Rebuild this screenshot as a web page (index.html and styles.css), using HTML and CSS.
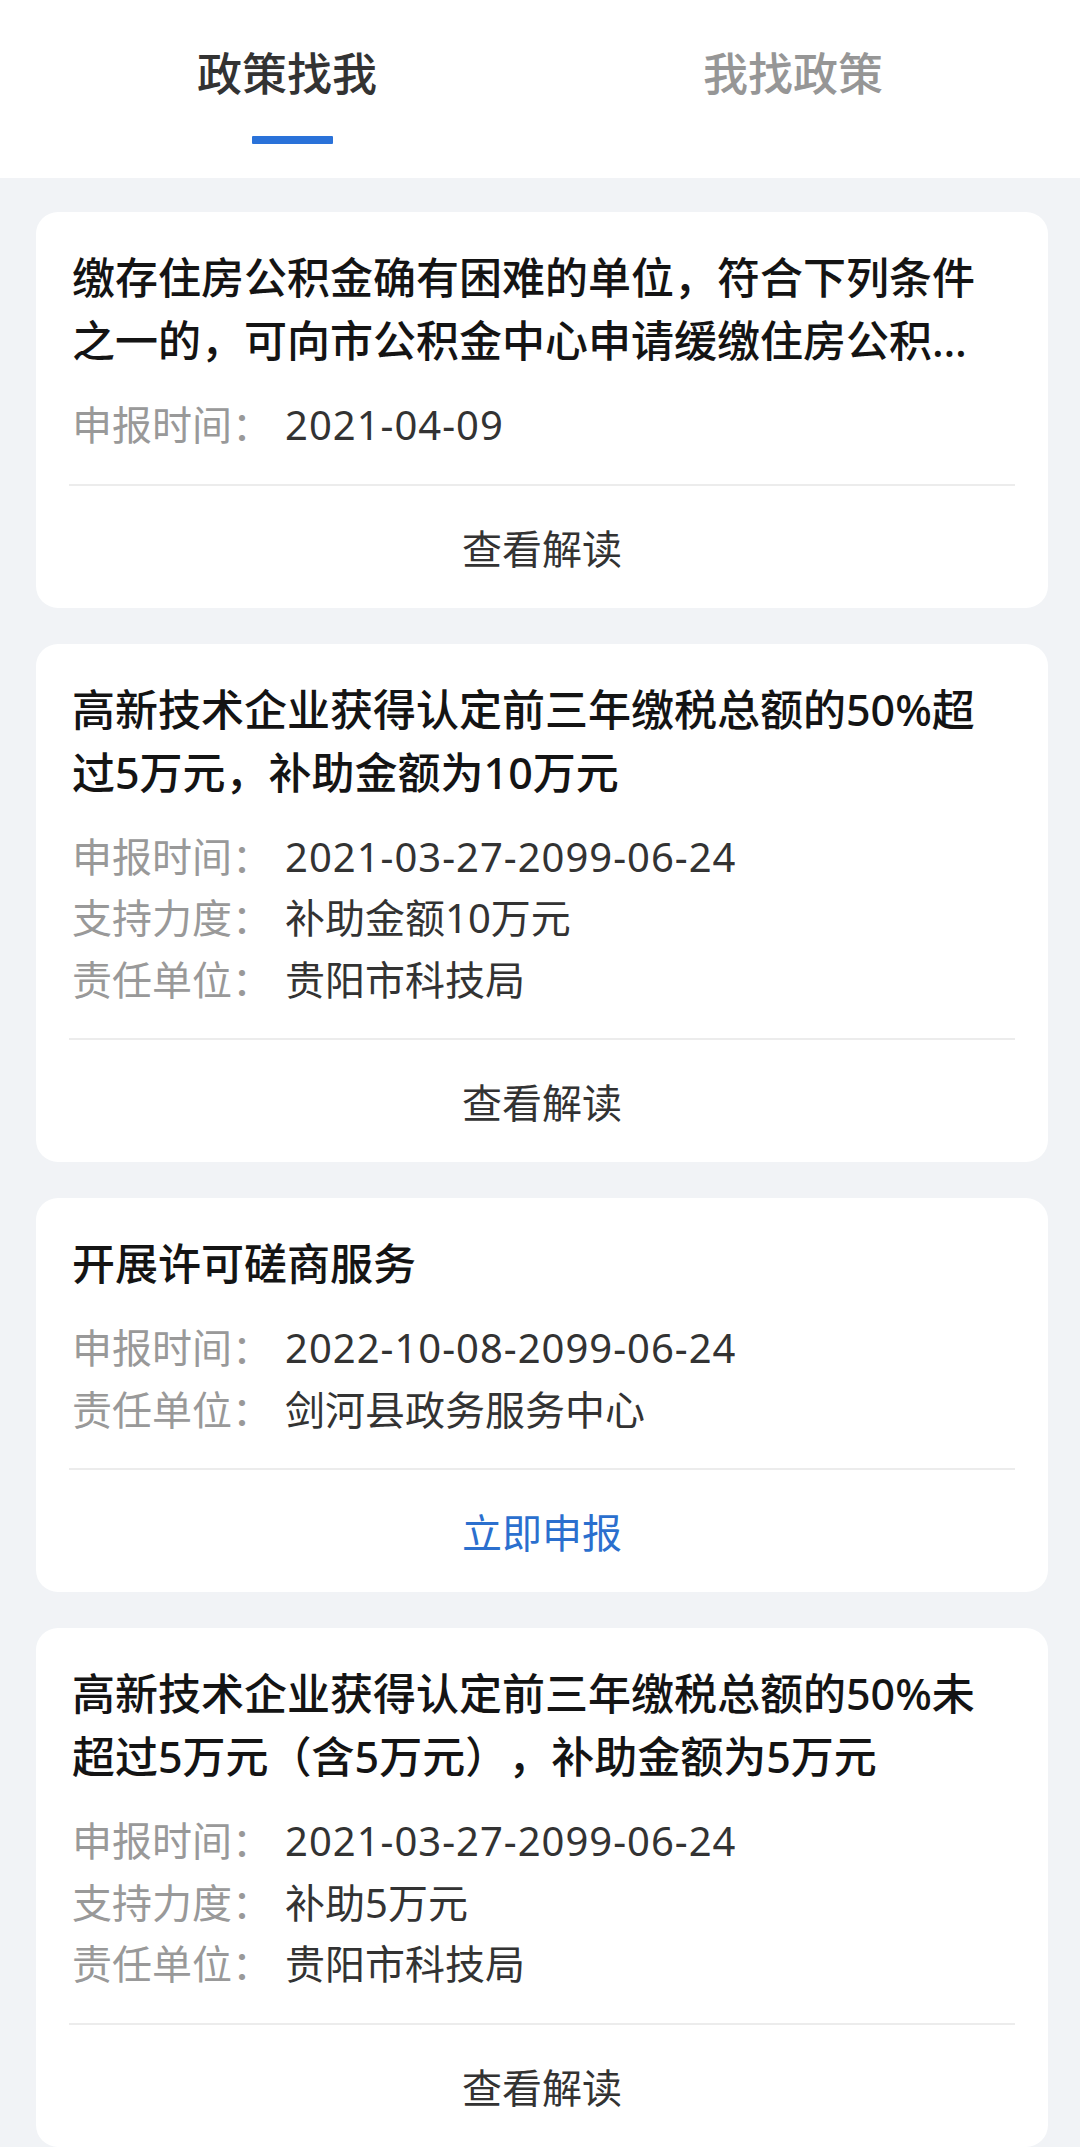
FILE: index.html
```html
<!DOCTYPE html>
<html lang="zh-CN">
<head>
  <meta charset="UTF-8">
  <meta name="viewport" content="width=device-width, initial-scale=1.0">
  <title>政策找我</title>
  <link rel="stylesheet" href="styles.css">
</head>
<body>

<header class="tabs">
  <div class="tab active">
    <span class="tab-text">政策找我</span>
    <i class="tab-line"></i>
  </div>
  <div class="tab">
    <span class="tab-text">我找政策</span>
  </div>
</header>

<main class="list">

  <section class="card">
    <div class="card-body">
      <h3 class="title clamp">缴存住房公积金确有困难的单位，符合下列条件之一的，可向市公积金中心申请缓缴住房公积金：</h3>
      <div class="rows">
        <div class="row"><span class="label">申报时间：</span><span class="value date">2021-04-09</span></div>
      </div>
    </div>
    <div class="divider"></div>
    <a href="#" class="action">查看解读</a>
  </section>

  <section class="card">
    <div class="card-body">
      <h3 class="title">高新技术企业获得认定前三年缴税总额的50%超过5万元，补助金额为10万元</h3>
      <div class="rows">
        <div class="row"><span class="label">申报时间：</span><span class="value date">2021-03-27-2099-06-24</span></div>
        <div class="row"><span class="label">支持力度：</span><span class="value">补助金额10万元</span></div>
        <div class="row"><span class="label">责任单位：</span><span class="value">贵阳市科技局</span></div>
      </div>
    </div>
    <div class="divider"></div>
    <a href="#" class="action">查看解读</a>
  </section>

  <section class="card">
    <div class="card-body">
      <h3 class="title">开展许可磋商服务</h3>
      <div class="rows">
        <div class="row"><span class="label">申报时间：</span><span class="value date">2022-10-08-2099-06-24</span></div>
        <div class="row"><span class="label">责任单位：</span><span class="value">剑河县政务服务中心</span></div>
      </div>
    </div>
    <div class="divider"></div>
    <a href="#" class="action primary">立即申报</a>
  </section>

  <section class="card">
    <div class="card-body">
      <h3 class="title">高新技术企业获得认定前三年缴税总额的50%未超过5万元（含5万元），补助金额为5万元</h3>
      <div class="rows">
        <div class="row"><span class="label">申报时间：</span><span class="value date">2021-03-27-2099-06-24</span></div>
        <div class="row"><span class="label">支持力度：</span><span class="value">补助5万元</span></div>
        <div class="row"><span class="label">责任单位：</span><span class="value">贵阳市科技局</span></div>
      </div>
    </div>
    <div class="divider"></div>
    <a href="#" class="action">查看解读</a>
  </section>

</main>

</body>
</html>
```

FILE: styles.css
```css
body {
  margin: 0;
  font-family: "Noto Sans", "Noto Sans CJK SC", sans-serif;
  background-color: #fff;
  text-spacing-trim: space-all;
}

/* top tabs */
.tabs {
  display: flex;
  height: 178px;
  padding: 0 34px;
  background-color: #fff;
  box-sizing: border-box;
}

.tab {
  flex: 1;
  display: flex;
  flex-direction: column;
  align-items: center;
  padding-top: 48px;
}

.tab-text {
  font-size: 45px;
  line-height: 52px;
  font-weight: 500;
  color: #969696;
}

.tab.active .tab-text {
  color: #333;
}

.tab-line {
  display: block;
  width: 81px;
  height: 8px;
  margin-top: 36px;
  margin-left: 10px;
  background-color: #2a72d9;
  border-radius: 1px;
}

/* list */
.list {
  display: flex;
  flex-direction: column;
  gap: 36px;
  padding: 34px 32px 0 36px;
  background-color: #f1f3f6;
}

.card {
  padding-top: 34px;
  background-color: #fff;
  border-radius: 22px;
  overflow: hidden;
}

.card-body {
  padding: 0 46px 0 36px;
}

.title {
  margin: 0;
  font-size: 43px;
  line-height: 63px;
  font-weight: 500;
  color: #141414;
}

.clamp {
  display: -webkit-box;
  -webkit-line-clamp: 2;
  -webkit-box-orient: vertical;
  overflow: hidden;
}

.rows {
  margin-top: 22px;
}

.row {
  display: flex;
  font-size: 40px;
  line-height: 61.5px;
}

.label {
  width: 213px;
  flex-shrink: 0;
  color: #999;
}

.value {
  color: #333;
}

.date {
  letter-spacing: 1px;
}

.divider {
  height: 2px;
  margin: 28px 33px 0;
  background-color: #ececec;
}

.action {
  display: block;
  height: 118px;
  padding-top: 4px;
  line-height: 118px;
  text-align: center;
  font-size: 40px;
  color: #333;
  text-decoration: none;
}

.action.primary {
  color: #2b6fce;
}
```
